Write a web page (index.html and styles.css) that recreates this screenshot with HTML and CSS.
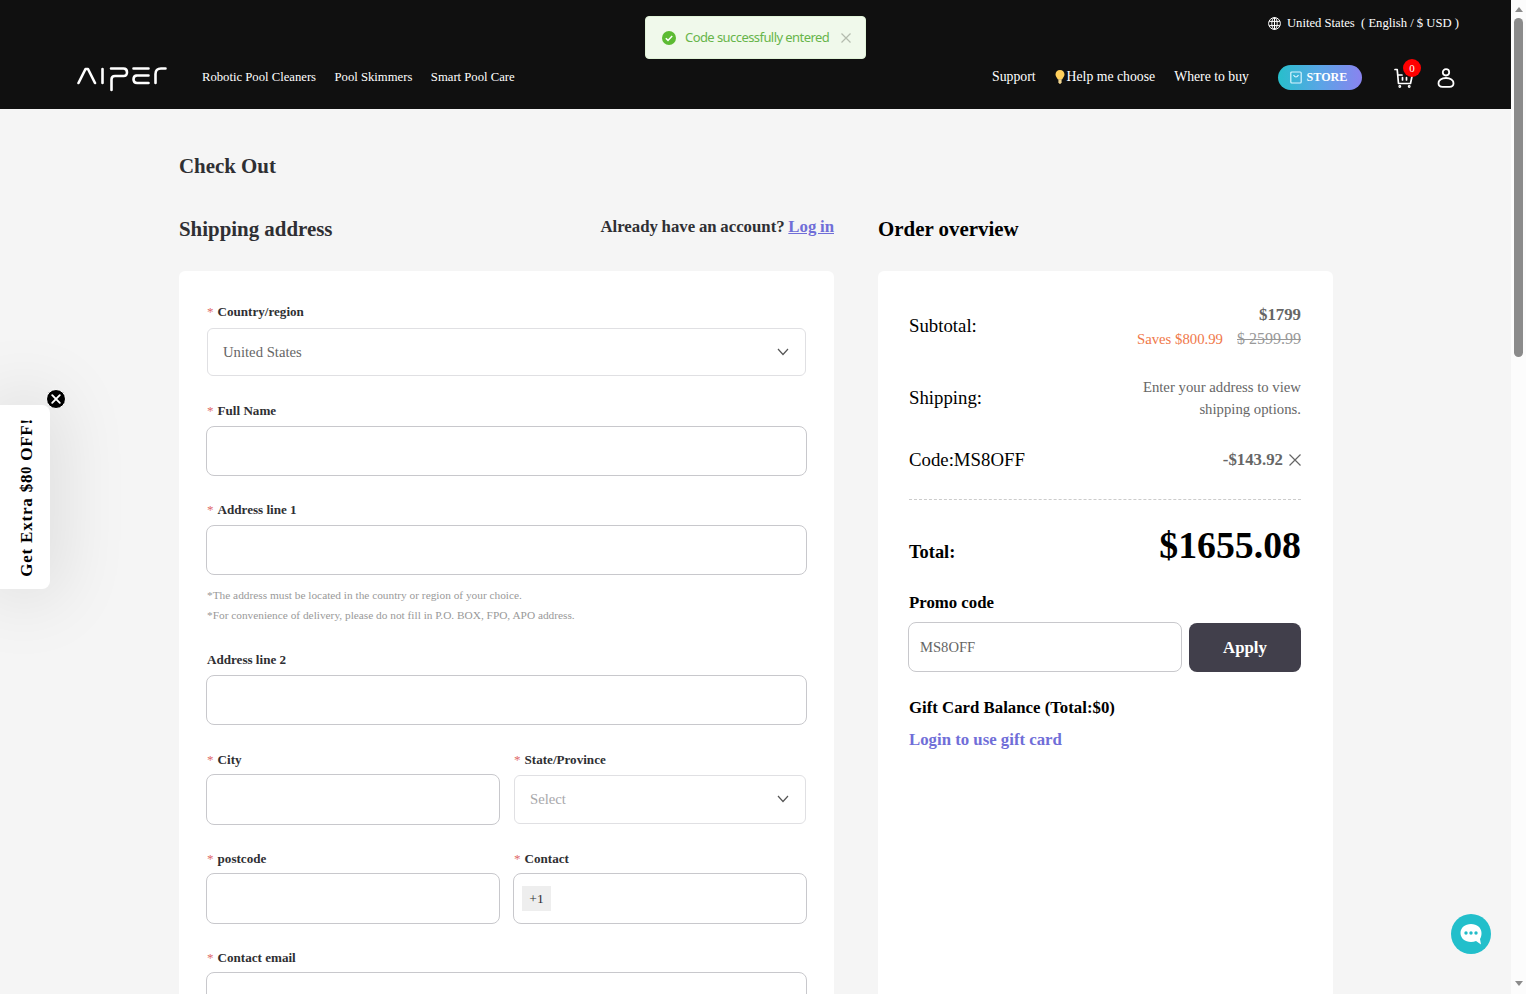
FILE: index.html
```html
<!DOCTYPE html>
<html lang="en">
<head>
  <meta charset="UTF-8" />
  <meta name="viewport" content="width=device-width, initial-scale=1.0" />
  <title>Check Out - Aiper</title>
  <link rel="stylesheet" href="styles.css">
</head>
<body>
  <div class="page">
    <header class="header">
      <div class="locale">
        <svg width="13" height="13" viewBox="0 0 13 13" fill="none" stroke="#fff"><circle cx="6.5" cy="6.5" r="5.9"/><ellipse cx="6.5" cy="6.5" rx="2.7" ry="5.9"/><path d="M1.2 4.4h10.6M1.2 8.6h10.6M6.5 .6v11.8"/></svg>
        <span>United States &nbsp;( English / $ USD )</span>
      </div>
      <nav class="nav">
        <svg class="logo" width="90" height="26" viewBox="0 0 90 26" fill="none" stroke="#fff" stroke-width="2.600" stroke-linejoin="round" stroke-linecap="round"><path d="M1.500 17 8.500 3h2.500L18 17M25.500 3v14M34 2.500h12.500q3.500 0 3.500 3.800t-3.500 3.700H38q-3.500 0-3.500 3.500V24M56.500 2.500h15M59 9.500h12.500M71.500 17H60q-3.500 0-3.500-3.700t3.500-3.800M78.500 17V8q0-5.500 5.500-5.500h4.500"/></svg>
        <div class="links">
          <a>Robotic Pool Cleaners</a>
          <a>Pool Skimmers</a>
          <a>Smart Pool Care</a>
        </div>
        <div class="links links-right">
          <a>Support</a>
          <a class="help"><svg width="10" height="14" viewBox="0 0 10 14"><path d="M5 0C2.300 0 .5 2 .5 4.500c0 2 1.500 3.200 2.400 5h4.200c.9-1.800 2.400-3 2.400-5C9.500 2 7.700 0 5 0z" fill="#ffcf5c"/><path d="M3.400 9.300h3.200v3L5.800 13.800H4.200l-.8-1.500z" fill="#f0d490"/></svg>Help me choose</a>
          <a>Where to buy</a>
        </div>
        <a class="store"><svg width="12" height="13" viewBox="0 0 12 13" fill="none" stroke="#d9f4ff" stroke-width="1.200"><rect x=".8" y="1" width="10.400" height="11" rx="1"/><path d="M3.500 4q2.500 4 5 0"/></svg>STORE</a>
        <div class="cart">
          <svg width="20" height="20" viewBox="0 0 20 20" fill="none" stroke="#fff" stroke-width="1.700" stroke-linecap="round" stroke-linejoin="round"><path d="M1 1.500h2.200L4.500 15.500h12L18.500 6M4 7h4M8.500 9.500v2.500M12.500 9.500v2.500"/><circle cx="5.800" cy="18.500" r=".6"/><circle cx="15.200" cy="18.500" r=".6"/></svg>
          <span class="badge">0</span>
        </div>
        <svg class="user" width="18" height="20" viewBox="0 0 18 20" fill="none" stroke="#fff" stroke-width="1.800"><circle cx="9" cy="4.300" r="3.200"/><path d="M9 10c-4.500 0-7.500 2.400-7.500 5.300 0 2.300 1.800 3.500 4 3.500h7c2.200 0 4-1.200 4-3.500C16.500 12.400 13.500 10 9 10z"/></svg>
      </nav>
    </header>

    <main class="checkout">
      <h1>Check Out</h1>
      <div class="columns">
        <section class="shipping">
          <div class="section-head">
            <h2>Shipping address</h2>
            <p class="account">Already have an account? <a>Log in</a></p>
          </div>
          <form class="card">
            <div class="field country">
              <label class="required">Country/region</label>
              <div class="select">United States<svg width="12" height="8" viewBox="0 0 12 8" fill="none" stroke="#555" stroke-width="1.200"><path d="M1 1l5 5.500L11 1"/></svg></div>
            </div>
            <div class="field">
              <label class="required">Full Name</label>
              <input type="text">
            </div>
            <div class="field">
              <label class="required">Address line 1</label>
              <input type="text">
              <p class="note">*The address must be located in the country or region of your choice.<br>*For convenience of delivery, please do not fill in P.O. BOX, FPO, APO address.</p>
            </div>
            <div class="field">
              <label>Address line 2</label>
              <input type="text">
            </div>
            <div class="pair">
              <div class="field">
                <label class="required">City</label>
                <input type="text">
              </div>
              <div class="field">
                <label class="required">State/Province</label>
                <div class="select placeholder">Select<svg width="12" height="8" viewBox="0 0 12 8" fill="none" stroke="#555" stroke-width="1.200"><path d="M1 1l5 5.500L11 1"/></svg></div>
              </div>
            </div>
            <div class="pair">
              <div class="field">
                <label class="required">postcode</label>
                <input type="text">
              </div>
              <div class="field">
                <label class="required">Contact</label>
                <div class="phone"><span>+1</span></div>
              </div>
            </div>
            <div class="field email">
              <label class="required">Contact email</label>
              <input type="text">
            </div>
          </form>
        </section>

        <section class="overview">
          <div class="section-head">
            <h2>Order overview</h2>
          </div>
          <div class="card">
            <div class="row subtotal">
              <span class="name">Subtotal:</span>
              <div class="value">
                <b>$1799</b>
                <div><span class="saves">Saves $800.99</span><s>$ 2599.99</s></div>
              </div>
            </div>
            <div class="row ship">
              <span class="name">Shipping:</span>
              <div class="value">Enter your address to view<br>shipping options.</div>
            </div>
            <div class="row code">
              <span class="name">Code:MS8OFF</span>
              <b class="value">-$143.92<svg width="12" height="12" viewBox="0 0 12 12" stroke="#666" stroke-width="1.200"><path d="M.5.500l11 11M11.500.500l-11 11"/></svg></b>
            </div>
            <div class="row total">
              <b>Total:</b>
              <b class="amount">$1655.08</b>
            </div>
            <h3>Promo code</h3>
            <div class="promo">
              <input type="text" value="MS8OFF">
              <button type="button">Apply</button>
            </div>
            <h3>Gift Card Balance (Total:$0)</h3>
            <a class="gift-login">Login to use gift card</a>
          </div>
        </section>
      </div>
    </main>

    <div class="toast">
      <svg width="14" height="14" viewBox="0 0 14 14"><circle cx="7" cy="7" r="7" fill="#5cbb33"/><path d="M3.800 7.200l2.200 2.200 4.200-4.500" fill="none" stroke="#fff" stroke-width="1.500"/></svg>
      <span>Code successfully entered</span>
      <svg width="10" height="10" viewBox="0 0 10 10" stroke="#b4bcae" stroke-width="1.200"><path d="M.5.500l9 9M9.500.500l-9 9"/></svg>
    </div>

    <div class="teaser">
      <span class="teaser-text">Get Extra $8<small>0</small> OFF!</span>
      <svg class="teaser-close" width="20" height="20" viewBox="0 0 20 20"><circle cx="10" cy="10" r="9.500" fill="#000" stroke="#fff"/><path d="M6.200 6.200l7.600 7.600M13.800 6.200l-7.600 7.600" stroke="#fff" stroke-width="1.900" stroke-linecap="round"/></svg>
    </div>

    <div class="chat">
      <svg width="24" height="24" viewBox="0 0 24 24"><path d="M12 2C6 2 1.500 5.800 1.500 11S6 20 12 20c1.800 0 3.500-.3 5-.9l5 3.400-1-5.500c1-1.500 1.500-3.600 1.500-6C22.500 5.800 18 2 12 2z" fill="#fff"/><g fill="#22bcc8"><circle cx="7" cy="11" r="1.700"/><circle cx="12" cy="11" r="1.700"/><circle cx="17" cy="11" r="1.700"/></g></svg>
    </div>
  </div>

  <div class="scrollbar">
    <i class="arrow up"></i>
    <i class="thumb"></i>
    <i class="arrow down"></i>
  </div>
</body>
</html>
```
FILE: styles.css
```css
* { box-sizing: border-box; }
body { margin: 0; height: 100vh; display: flex; overflow: hidden; background: #f5f5f5; font-family: "Liberation Serif", "Times New Roman", serif; color: #2f2f33; }
h1, h2, h3, p { margin: 0; }
svg { flex: none; display: block; }

.page { position: relative; width: 1511px; height: 994px; overflow: hidden; }

/* header */
.header { height: 109px; background: #101010; color: #fff; padding: 13px 56px 0 77px; }
.locale { display: flex; justify-content: flex-end; align-items: center; gap: 6px; height: 20px; margin-right: -4px; font-size: 12.65px; white-space: nowrap; }
.nav { display: flex; align-items: center; height: 44px; margin-top: 22px; }
.logo { margin-top: 3px; }
.links { display: flex; gap: 18.5px; margin-left: 35px; font-size: 12.68px; white-space: nowrap; }
.links-right { margin-left: auto; gap: 19px; font-size: 13.75px; }
.help { display: flex; align-items: center; gap: 2px; }
.store { display: flex; align-items: center; justify-content: center; gap: 5px; width: 84px; height: 25px; padding-right: 3px; margin-left: 29px; border-radius: 13px; background: linear-gradient(90deg, #27bfcb, #5aa5e6 50%, #8a83ef); font-size: 12.1px; font-weight: bold; }
.cart { position: relative; margin: 2px 23px 0 32px; }
.badge { position: absolute; left: 9px; top: -9px; width: 18px; height: 18px; border-radius: 50%; background: #f00; font-size: 11px; line-height: 18px; text-align: center; }
.user { margin-top: 2px; }

/* checkout */
.checkout { padding: 44px 178px 0 179px; }
h1 { font-size: 20.9px; line-height: 26px; }
.columns { display: flex; gap: 44px; margin-top: 32px; }
.shipping { width: 655px; }
.overview { width: 455px; color: #000; }
.section-head { display: flex; justify-content: space-between; height: 60px; }
h2 { font-size: 20.9px; line-height: 36px; }
.account { font-size: 16.8px; font-weight: bold; line-height: 32px; word-spacing: -.5px; }
.account a { color: #706ed8; text-decoration: underline; }
.card { height: 800px; background: #fff; border-radius: 6px; padding: 23px 27px; }

.field { margin-bottom: 16.3px; }
.country { margin-bottom: 17px; }
label { display: block; height: 33px; line-height: 36px; font-size: 13.1px; font-weight: bold; padding-left: 1px; }
.required::before { content: "*"; color: #e06a6a; font-weight: normal; margin-right: 4px; }
input, .phone { display: block; width: 100%; height: 50px; background: #fff; border: 1px solid #c8c8cc; border-radius: 8px; outline: none; }
.select { display: flex; align-items: center; justify-content: space-between; height: 48px; margin: 1px; padding: 0 16px 0 15px; border: 1px solid #e0e0e3; border-radius: 6px; color: #666; font-size: 14.7px; }
.placeholder { color: #a8a8ab; }
.note { padding: 10px 0 0 1px; font-size: 11.33px; line-height: 20px; color: #999; white-space: nowrap; }
.pair { display: grid; grid-template-columns: 1fr 1fr; gap: 13px; }
.pair .field { margin-bottom: 15.2px; }
.pair label, .email label { line-height: 38px; }
.pair input, .phone { height: 51px; }
.pair .select { height: 49px; }
.phone { padding: 12px 8px; }
.phone span { display: block; width: 29px; height: 25px; line-height: 25px; background: #eee; font-size: 13.5px; text-align: center; }

/* order overview */
.overview .card { padding: 32px 32px 32px 31px; }
.row { display: flex; justify-content: space-between; align-items: center; }
.name { font-size: 18.8px; }
.value { color: #666; font-size: 14.75px; line-height: 22px; text-align: right; }
.value b, b.value { font-size: 16.8px; }
.subtotal { height: 48px; }
.subtotal .name { margin-top: -2px; }
.subtotal .value { line-height: 24px; }
.saves { color: #f0784a; margin-right: 14px; }
s { color: #999; font-size: 16px; }
.ship { height: 44px; margin-top: 25px; }
.code { height: 22px; margin-top: 29px; }
.code .value { display: flex; align-items: center; gap: 6px; }
.total { height: 64px; margin-top: 28px; padding-top: 23px; margin-bottom: 28px; border-top: 1px dashed #ccc; align-items: baseline; font-size: 18.4px; }
.amount { font-size: 37.8px; }
h3 { font-size: 16.8px; line-height: 24px; }
.promo { display: flex; gap: 7px; margin: 7px 0 24px -1px; }
.promo input { width: 274px; padding: 0 11px; font: 14.6px "Liberation Serif", serif; color: #666; }
.promo button { width: 112px; height: 49px; margin-top: 1px; border: 0; border-radius: 8px; background: #413f4b; color: #fff; font: bold 16.8px "Liberation Serif", serif; }
.gift-login { display: block; margin-top: 8px; font-size: 16.8px; line-height: 24px; font-weight: bold; color: #706ed8; }

/* floating items */
.toast { position: absolute; left: 645px; top: 16px; width: 221px; height: 43px; display: flex; align-items: center; padding: 0 16px; background: #f0f9eb; border: 1px solid #e1f3d8; border-radius: 4px; color: #67b54a; font: 13px "Noto Sans", sans-serif; white-space: nowrap; }
.toast span { width: 144px; margin: -1px 12px 0 9px; letter-spacing: -.57px; }
.teaser { position: absolute; left: 0; top: 405px; width: 50px; height: 184px; display: flex; align-items: center; justify-content: center; background: #fff; border-radius: 0 8px 8px 0; box-shadow: 0 0 70px 10px rgba(0, 0, 0, .1); color: #000; }
.teaser-text { writing-mode: vertical-rl; transform: rotate(180deg); font-size: 17px; font-weight: bold; letter-spacing: .8px; white-space: nowrap; margin-left: 4px; }
.teaser-text small { font-size: 14px; }
.teaser-close { position: absolute; left: 46px; top: -16px; }
.chat { position: absolute; left: 1451px; top: 914px; width: 40px; height: 40px; display: flex; align-items: center; justify-content: center; background: #22bfcb; border-radius: 50%; }

.scrollbar { width: 15px; height: 994px; display: flex; flex-direction: column; align-items: center; background: #fcfcfc; padding: 7px 0 8px; }
.arrow { border: 4px solid transparent; }
.up { border-top: 0; border-bottom: 5px solid #8b8b8b; }
.down { border-bottom: 0; border-top: 5px solid #8b8b8b; margin-top: auto; }
.thumb { width: 9px; height: 339px; margin-top: 6px; border-radius: 5px; background: #8b8b8b; }
```
